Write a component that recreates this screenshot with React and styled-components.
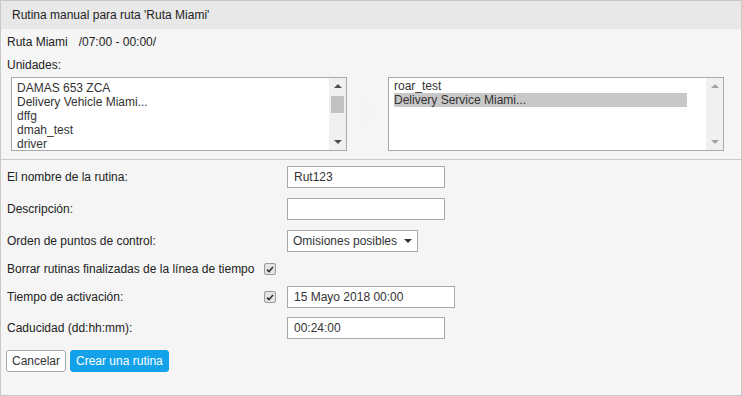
import React from 'react';
import styled, { createGlobalStyle } from 'styled-components';

const GlobalStyle = createGlobalStyle`
  html, body {
    margin: 0;
    padding: 0;
    background: #fff;
  }
  body {
    font-family: "Liberation Sans", Arial, sans-serif;
    font-size: 12px;
    color: #333;
  }
`;

// Dialog frame
const Dialog = styled.div`
  width: 742px;
  height: 396px;
  box-sizing: border-box;
  border: 1px solid #c9c9c9;
  background: #f5f5f5;
  display: flex;
  flex-direction: column;
`;

const Header = styled.div`
  height: 28px;
  line-height: 28px;
  background: #e8e8e8;
  padding-left: 11px;
  color: #222;
`;

const Top = styled.div`
  padding: 5px 6px 0 6px;
  height: 131px;
  box-sizing: border-box;
  border-bottom: 1px solid #c9c9c9;
`;

const RouteLine = styled.div`
  height: 16px;
  line-height: 16px;
  color: #222;
`;

const Time = styled.span`
  margin-left: 11px;
`;

const Caption = styled.div`
  margin-top: 7px;
  height: 16px;
  line-height: 16px;
  color: #222;
`;

const Lists = styled.div`
  display: flex;
  align-items: flex-start;
  margin-top: 4px;
  padding-left: 4px;
`;

const ListBox = styled.div`
  width: 336px;
  height: 74px;
  box-sizing: border-box;
  border: 1px solid #a9a9a9;
  background: #fff;
  display: flex;
  overflow: hidden;
`;

const Items = styled.div`
  flex: 1;
  padding: ${(p) => (p.$tight ? '1px 0 0 5px' : '3px 0 0 5px')};
`;

const Item = styled.div`
  height: 14px;
  line-height: 14px;
  white-space: nowrap;
  color: #333;
  width: 293px;
  background: ${(p) => (p.$selected ? '#c8c8c8' : 'transparent')};
`;

const ScrollBar = styled.div`
  width: 17px;
  background: #f0f0f0;
  position: relative;
  display: flex;
  flex-direction: column;
  align-items: center;
  justify-content: space-between;
  padding: 6px 0;
  box-sizing: border-box;
`;

const ArrowUp = styled.span`
  width: 0;
  height: 0;
  border-left: 4px solid transparent;
  border-right: 4px solid transparent;
  border-bottom: 4px solid ${(p) => (p.$disabled ? '#a3a3a3' : '#505050')};
`;

const ArrowDown = styled(ArrowUp)`
  border-bottom: none;
  border-top: 4px solid ${(p) => (p.$disabled ? '#a3a3a3' : '#505050')};
`;

const Thumb = styled.span`
  position: absolute;
  left: 2px;
  top: 18px;
  width: 13px;
  height: 17px;
  background: #c1c1c1;
`;

const Movers = styled.div`
  width: 41px;
  padding-top: 20px;
  display: flex;
  flex-direction: column;
  align-items: center;
  gap: 4px;
  color: #fff;
  font-size: 14px;
  line-height: 14px;
  text-shadow: 0 0 1px #dcdcdc;
`;

// Form part
const Form = styled.div`
  padding: 6px 6px 0 6px;
  display: flex;
  flex-direction: column;
`;

const Row = styled.div`
  display: grid;
  grid-template-columns: 257px 23px auto;
  align-items: center;
  min-height: ${(p) => (p.$short ? '14px' : '22px')};
  margin-bottom: ${(p) => p.$gap || 10}px;
`;

const Label = styled.div`
  grid-column: 1;
  color: #222;
  white-space: nowrap;
`;

const Field = styled.div`
  grid-column: 3;
`;

const TextInput = styled.div`
  width: ${(p) => p.$width || 158}px;
  height: 22px;
  box-sizing: border-box;
  border: 1px solid #a9a9a9;
  background: #fff;
  padding-left: 6px;
  line-height: 20px;
  color: #333;
`;

const Select = styled.div`
  width: 131px;
  height: 22px;
  box-sizing: border-box;
  border: 1px solid #a9a9a9;
  background: #fff;
  padding-left: 5px;
  display: flex;
  align-items: center;
  gap: 7px;
  color: #333;
`;

const Caret = styled.span`
  width: 0;
  height: 0;
  border-left: 4px solid transparent;
  border-right: 4px solid transparent;
  border-top: 4px solid #333;
`;

const CheckBox = styled.span`
  grid-column: 2;
  width: 12px;
  height: 12px;
  box-sizing: border-box;
  border: 1px solid #9a9a9a;
  border-radius: 2px;
  background: #e4e4e4;
  display: flex;
  align-items: center;
  justify-content: center;
`;

const Buttons = styled.div`
  display: flex;
  gap: 4px;
  margin: 1px 0 0 -1px;
`;

const Button = styled.button`
  height: 22px;
  box-sizing: border-box;
  padding: 0 5px;
  font-family: "Liberation Sans", Arial, sans-serif;
  font-size: 12px;
  border-radius: 3px;
  cursor: pointer;
  border: 1px solid ${(p) => (p.$primary ? '#13a1ea' : '#a9a9a9')};
  background: ${(p) => (p.$primary ? '#13a1ea' : '#fff')};
  color: ${(p) => (p.$primary ? '#fff' : '#333')};
`;

const Check = () => (
  <svg width="8" height="7" viewBox="0 0 8 7">
    <path d="M1 3.6 L3 5.6 L7 1" fill="none" stroke="#333" strokeWidth="1.6" />
  </svg>
);

const available = ['DAMAS 653 ZCA', 'Delivery Vehicle Miami...', 'dffg', 'dmah_test', 'driver'];
const chosen = ['roar_test', 'Delivery Service Miami...'];

const App = () => {
  return (
    <>
      <GlobalStyle />
      <Dialog>
        <Header>Rutina manual para ruta 'Ruta Miami'</Header>
        <Top>
          <RouteLine>
            Ruta Miami<Time>/07:00 - 00:00/</Time>
          </RouteLine>
          <Caption>Unidades:</Caption>
          <Lists>
            <ListBox>
              <Items>
                {available.map((name) => (
                  <Item key={name}>{name}</Item>
                ))}
              </Items>
              <ScrollBar>
                <ArrowUp />
                <Thumb />
                <ArrowDown />
              </ScrollBar>
            </ListBox>
            <Movers>
              <span>»</span>
              <span>«</span>
            </Movers>
            <ListBox>
              <Items $tight>
                {chosen.map((name, index) => (
                  <Item key={name} $selected={index === 1}>
                    {name}
                  </Item>
                ))}
              </Items>
              <ScrollBar>
                <ArrowUp $disabled />
                <ArrowDown $disabled />
              </ScrollBar>
            </ListBox>
          </Lists>
        </Top>
        <Form>
          <Row>
            <Label>El nombre de la rutina:</Label>
            <Field>
              <TextInput>Rut123</TextInput>
            </Field>
          </Row>
          <Row>
            <Label>Descripción:</Label>
            <Field>
              <TextInput />
            </Field>
          </Row>
          <Row>
            <Label>Orden de puntos de control:</Label>
            <Field>
              <Select>
                Omisiones posibles
                <Caret />
              </Select>
            </Field>
          </Row>
          <Row $short>
            <Label>Borrar rutinas finalizadas de la línea de tiempo</Label>
            <CheckBox>
              <Check />
            </CheckBox>
          </Row>
          <Row $gap={9}>
            <Label>Tiempo de activación:</Label>
            <CheckBox>
              <Check />
            </CheckBox>
            <Field>
              <TextInput $width={168}>15 Mayo 2018 00:00</TextInput>
            </Field>
          </Row>
          <Row>
            <Label>Caducidad (dd:hh:mm):</Label>
            <Field>
              <TextInput>00:24:00</TextInput>
            </Field>
          </Row>
          <Buttons>
            <Button>Cancelar</Button>
            <Button $primary>Crear una rutina</Button>
          </Buttons>
        </Form>
      </Dialog>
    </>
  );
};

export default App;
